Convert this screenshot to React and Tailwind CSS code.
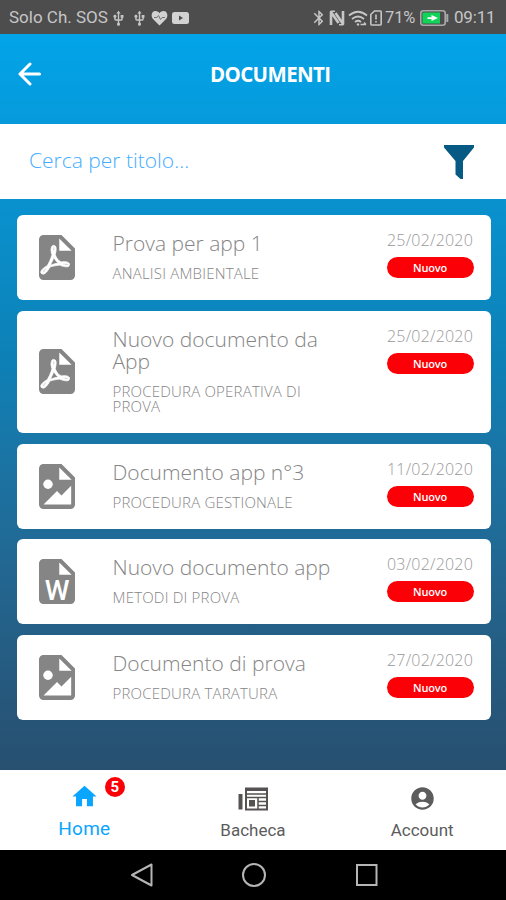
import React from 'react';
import { MdHome, MdAccountCircle, MdBluetooth, MdUsb } from 'react-icons/md';

const sheetPath = 'M13,9H18.5L13,3.5V9M6,2H14L20,8V20A2,2 0 0,1 18,22H6C4.89,22 4,21.1 4,20V4C4,2.89 4.89,2 6,2Z';

const acrobatPath =
  'M11.93,12.44C12.34,13.34 12.86,14.08 13.46,14.59L13.87,14.91C13,15.07 11.8,15.35 10.53,15.84V15.84L10.42,15.88L10.92,14.84C11.37,13.97 11.7,13.18 11.93,12.44M18.41,16.25C18.59,16.07 18.68,15.84 18.69,15.59C18.72,15.39 18.67,15.2 18.57,15.04C18.28,14.57 17.53,14.35 16.29,14.35L15,14.42L14.13,13.84C13.5,13.32 12.93,12.41 12.53,11.28L12.57,11.14C12.9,9.81 13.21,8.2 12.55,7.54C12.39,7.38 12.17,7.3 11.94,7.3H11.7C11.33,7.3 11,7.69 10.91,8.07C10.54,9.4 10.76,10.13 11.13,11.34V11.35C10.88,12.23 10.56,13.25 10.05,14.28L9.09,16.08L8.2,16.57C7,17.32 6.43,18.16 6.32,18.69C6.28,18.88 6.3,19.05 6.37,19.23L6.4,19.28L6.88,19.59L7.32,19.7C8.13,19.7 9.05,18.75 10.29,16.63L10.47,16.56C11.5,16.23 12.78,16 14.5,15.81C15.53,16.32 16.74,16.55 17.5,16.55C17.94,16.55 18.24,16.44 18.41,16.25M18,15.54L18.09,15.65C18.08,15.75 18.05,15.76 18,15.78H17.96L17.77,15.8C17.31,15.8 16.6,15.61 15.87,15.29C15.96,15.19 16,15.19 16.1,15.19C17.5,15.19 17.9,15.44 18,15.54M8.83,17C8.18,18.19 7.59,18.85 7.14,19C7.19,18.62 7.64,17.96 8.35,17.31L8.83,17M11.85,10.09C11.62,9.19 11.61,8.46 11.78,8.04L11.85,7.92L12,7.97C12.17,8.21 12.19,8.53 12.09,9.07L12.06,9.23L11.9,10.05L11.85,10.09Z';

const documents = [
  { type: 'pdf', title: 'Prova per app 1', category: 'ANALISI AMBIENTALE', date: '25/02/2020', height: 'h-[85px]' },
  {
    type: 'pdf',
    title: 'Nuovo documento da App',
    category: 'PROCEDURA OPERATIVA DI PROVA',
    date: '25/02/2020',
    height: 'h-[122px]',
  },
  { type: 'image', title: 'Documento app n°3', category: 'PROCEDURA GESTIONALE', date: '11/02/2020', height: 'h-[85px]' },
  { type: 'word', title: 'Nuovo documento app', category: 'METODI DI PROVA', date: '03/02/2020', height: 'h-[85px]' },
  { type: 'image', title: 'Documento di prova', category: 'PROCEDURA TARATURA', date: '27/02/2020', height: 'h-[85px]' },
];

const FileIcon = ({ type }) => (
  <svg viewBox="4 2 16 20" className="h-[45px] w-9 shrink-0 overflow-visible">
    <path d={sheetPath} fill="#858585" />
    {type === 'pdf' && (
      <path
        d={acrobatPath}
        transform="translate(-1.7 -.9) scale(1.03)"
        fill="#fff"
        fillRule="evenodd"
        stroke="#fff"
        strokeWidth=".35"
      />
    )}
    {type === 'image' && (
      <g fill="#fff">
        <circle cx="8" cy="11" r="2.100" />
        <path d="M6 20L12 14L14 16L18.300 11.700V20Z" />
      </g>
    )}
    {type === 'word' && (
      <text x="12" y="20" textAnchor="middle" className="fill-white font-['Roboto'] text-[12.5px] font-medium">
        W
      </text>
    )}
  </svg>
);

const StatusBar = () => (
  <div className="flex h-[34px] items-center justify-between bg-[#4d4d4d] pt-[2px] pr-[11px] pl-[9px] font-['Roboto',sans-serif] text-[17px] text-[#c6c6c6]">
    <div className="flex items-center">
      <span className="w-[99px] whitespace-nowrap">Solo Ch. SOS</span>
      <MdUsb className="ml-[2px] size-[17px]" />
      <MdUsb className="ml-[4px] size-[17px]" />
      <svg viewBox="0 0 17 16" className="ml-[3px] h-4 w-[17px]">
        <path d="M8.5 15.5L2 9C-.5 6 .5 1 4.5 1C6.5 1 7.8 2 8.500 3.200C9.200 2 10.500 1 12.500 1C16.500 1 17.500 6 15 9Z" fill="#d2d2d2" />
        <path d="M3 7.500H6L7.500 5.500L9.500 9.500L11 7.500H14" fill="none" stroke="#777" strokeWidth="1" />
      </svg>
      <svg viewBox="0 0 17 12" className="ml-[4px] h-3 w-[17px]">
        <rect width="17" height="12" rx="2.500" fill="#d2d2d2" />
        <path d="M7 3.500L11 6L7 8.500Z" fill="#4d4d4d" />
      </svg>
    </div>
    <div className="flex items-center">
      <MdBluetooth className="size-[18px]" />
      <svg viewBox="0 0 16 16" className="ml-[1px] size-4" fill="none" stroke="#c6c6c6">
        <path d="M2 15V2L9.500 13" strokeWidth="2.600" strokeLinejoin="round" />
        <path d="M14 1V14L6.500 3" strokeWidth="2.600" strokeLinejoin="round" />
        <path d="M2 1.300H6M10 14.700H14" strokeWidth="1.400" />
      </svg>
      <svg viewBox="0 0 20 17" className="ml-[3px] h-[17px] w-5" fill="none" stroke="#c6c6c6" strokeWidth="1.800">
        <path d="M1 5.500Q10-2 19 5.500M4 9Q10 4 16 9M7 12Q10 9.500 13 12" />
        <circle cx="10" cy="14.500" r="1.200" fill="#c6c6c6" stroke="none" />
        <path d="M12.500 14.500H18M16 12.500L18 14.500" strokeWidth="1.400" />
      </svg>
      <svg viewBox="0 0 12 16" className="ml-[2px] h-4 w-3" fill="none" stroke="#c6c6c6" strokeWidth="1.600">
        <path d="M4.500 1H10.500Q11.200 1 11.200 2V14Q11.200 15 10.500 15H1.500Q.8 15 .8 14V4.500Z" />
        <path d="M6 4.500V9.500M6 11V12.500" />
      </svg>
      <span className="ml-[3px] w-[31px] text-[16.5px] tracking-[-0.1px] whitespace-nowrap">71%</span>
      <svg viewBox="0 0 29 16" className="ml-[4px] h-4 w-[29px]">
        <rect x=".8" y=".8" width="24.400" height="14.400" rx="2.500" fill="none" stroke="#a9a9a9" strokeWidth="1.600" />
        <rect x="2.500" y="2.500" width="17.500" height="11" fill="#12d35a" />
        <path d="M7.500 7.300H11.500V5L18 8L11.500 11V8.900H7.500Z" fill="#fff" />
        <path d="M27.300 4V12" stroke="#a9a9a9" strokeWidth="2" />
      </svg>
      <span className="ml-[5px] w-[41px] tracking-[-0.2px] whitespace-nowrap">09:11</span>
    </div>
  </div>
);

const Header = () => (
  <header className="flex h-[90px] items-center pb-[10px] pl-[18px]">
    <svg viewBox="0 0 24 24" className="size-6" fill="none" stroke="#fff" strokeWidth="3" strokeLinecap="round" strokeLinejoin="round">
      <path d="M21.500 12H2M12 2L2 12L12 22" />
    </svg>
    <h1 className="ml-[168px] text-[20.5px] font-bold tracking-[-0.65px] text-white">DOCUMENTI</h1>
  </header>
);

const SearchBar = () => (
  <div className="flex h-[75px] items-center justify-between bg-white pr-8 pl-[29px]">
    <span className="mb-[2px] text-[21px] font-light text-[#45adff]">Cerca per titolo...</span>
    <svg viewBox="0 0 30 34" className="h-[34px] w-[30px] fill-[#075a83]">
      <path d="M0 0H30V2.500L19 16V34H16.500L11.500 29.500V16L0 2.500Z" />
    </svg>
  </div>
);

const DocumentCard = ({ type, title, category, date, height }) => (
  <div className={`flex rounded-[6px] bg-white pr-[17px] pl-[22px] ${height}`}>
    <div className="flex items-center">
      <FileIcon type={type} />
    </div>
    <div className="ml-[38px] w-[230px] pt-[17px] text-[#858585]">
      <h2 className="text-[21px] leading-[22px] font-light">{title}</h2>
      <p className="mt-[12px] text-[15px] leading-[15px] font-light tracking-[0.2px]">{category}</p>
    </div>
    <div className="ml-auto flex w-[87px] flex-col items-center pt-[17px]">
      <span className="text-[16px] leading-[17px] font-light tracking-[0.2px] text-[#999999]">{date}</span>
      <span className="mt-[8px] h-[21px] w-full rounded-full bg-[#fb0007] text-center text-[11px] leading-[21px] font-semibold tracking-[-0.2px] text-white">
        Nuovo
      </span>
    </div>
  </div>
);

const NewsIcon = () => (
  <svg viewBox="0 0 30 24" className="h-6 w-[30px]" fill="none" stroke="#565252" strokeWidth="2">
    <path d="M2.500 7V22.500" strokeWidth="4" />
    <rect x="8" y="1.500" width="21" height="21" />
    <path d="M8 2.500H29" strokeWidth="3" />
    <path d="M8 7H29M8 10.500H29M20 14.500H28M20 18.500H28M20 11V22" strokeWidth="1.500" />
    <rect x="11" y="13" width="6" height="6.500" fill="#565252" stroke="none" />
  </svg>
);

const BottomNav = () => (
  <nav className="grid h-20 grid-cols-3 bg-white font-['Roboto',sans-serif] text-[#5c5c5c]">
    <div className="flex flex-col items-center pt-[12px] text-[#0aa5ff]">
      <div className="relative">
        <MdHome className="size-[29px]" />
        <span className="absolute top-[-5px] left-[35px] size-5 rounded-full bg-[#fb0007] text-center text-[15px] leading-5 font-bold text-white">
          5
        </span>
      </div>
      <span className="mt-[6px] text-[19px] leading-6 tracking-[0.2px]">Home</span>
    </div>
    <div className="flex flex-col items-center pt-[17px]">
      <NewsIcon />
      <span className="mt-[7px] text-[17px] leading-6">Bacheca</span>
    </div>
    <div className="flex flex-col items-center pt-[15px] pl-[1px]">
      <MdAccountCircle className="size-[27px]" />
      <span className="mt-[6px] text-[17px] leading-6">Account</span>
    </div>
  </nav>
);

const SystemNav = () => (
  <div className="flex h-[50px] items-center justify-center gap-[89px] bg-black pl-[1px]">
    <svg viewBox="0 0 24 24" className="size-6" fill="none" stroke="#b5b5b5" strokeWidth="2">
      <path d="M22.500 1.500V22.500L3 12Z" strokeLinejoin="round" />
    </svg>
    <svg viewBox="0 0 24 24" className="size-6" fill="none" stroke="#b5b5b5" strokeWidth="2">
      <circle cx="12" cy="12" r="11" />
    </svg>
    <svg viewBox="0 0 24 24" className="size-6" fill="none" stroke="#b5b5b5" strokeWidth="2">
      <rect x="2" y="2" width="19.500" height="20" />
    </svg>
  </div>
);

const App = () => {
  return (
    <div className="h-[900px] w-[506px] overflow-hidden bg-black font-['Open_Sans',sans-serif]">
      <StatusBar />
      <div className="h-[736px] bg-linear-to-b from-[#02a4e9] via-[#0d80b5] via-45% to-[#274f70]">
        <Header />
        <SearchBar />
        <main className="flex flex-col gap-[10.75px] pt-4 pr-[15.5px] pl-[16.5px]">
          {documents.map((doc) => (
            <DocumentCard key={doc.title} {...doc} />
          ))}
        </main>
      </div>
      <BottomNav />
      <SystemNav />
    </div>
  );
};

export default App;
